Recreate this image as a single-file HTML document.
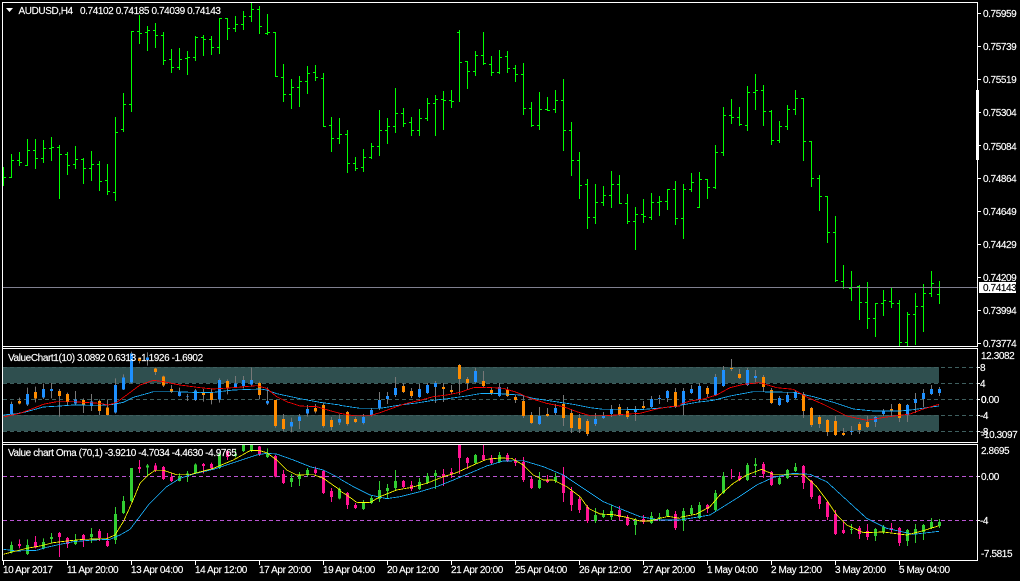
<!DOCTYPE html>
<html><head><meta charset="utf-8"><title>AUDUSD,H4</title>
<style>
html,body{margin:0;padding:0;background:#000;width:1020px;height:581px;overflow:hidden}
svg{display:block}
text{font-family:"Liberation Sans",sans-serif;font-size:10px;letter-spacing:-.4px;fill:#fff;stroke:#fff;stroke-width:.15px}
path,polyline{fill:none;shape-rendering:crispEdges}
</style></head><body>
<svg width="1020" height="581" viewBox="0 0 1020 581" xmlns="http://www.w3.org/2000/svg">
<rect width="1020" height="581" fill="#000"/>
<!-- main bars -->
<path stroke="#00ff00" d="M3.5 167V186M4 177.5h2M11.5 154V178M9 177.5h2M12 160.5h2M19.5 152V166M17 160.5h2M20 162.5h2M27.5 139V166M25 165.5h2M28 150.5h2M35.5 139V169M33 150.5h2M36 158.5h2M43.5 140V163M41 158.5h2M44 148.5h2M51.5 137V161M49 148.5h2M52 147.5h2M59.5 145V199M57 147.5h2M60 154.5h2M67.5 152V175M65 154.5h2M68 165.5h2M75.5 146V169M73 164.5h2M76 159.5h2M83.5 158V184M81 159.5h2M84 168.5h2M91.5 151V181M89 168.5h2M92 164.5h2M99.5 161V191M97 164.5h2M100 181.5h2M107.5 164V195M105 180.5h2M108 191.5h2M115.5 117V201M113 192.5h2M116 132.5h2M123.5 93V132M121 129.5h2M124 104.5h2M131.5 31V112M129 104.5h2M132 31.5h2M139.5 15V44M137 31.5h2M140 33.5h2M147.5 26V51M145 32.5h2M148 30.5h2M155.5 23V48M153 30.5h2M156 35.5h2M163.5 32V65M161 35.5h2M164 60.5h2M171.5 49V73M169 59.5h2M172 67.5h2M179.5 48V70M177 67.5h2M180 59.5h2M187.5 51V75M185 58.5h2M188 57.5h2M195.5 36V61M193 57.5h2M196 37.5h2M203.5 35V56M201 37.5h2M204 39.5h2M211.5 36V55M209 39.5h2M212 47.5h2M219.5 18V54M217 47.5h2M220 18.5h2M227.5 18V40M225 18.5h2M228 28.5h2M235.5 16V32M233 28.5h2M236 24.5h2M243.5 11V30M241 24.5h2M244 16.5h2M251.5 3V22M249 16.5h2M252 9.5h2M259.5 6V34M257 9.5h2M260 26.5h2M267.5 14V35M265 33.5h2M268 32.5h2M275.5 32V77M273 32.5h2M276 76.5h2M283.5 64V102M281 77.5h2M284 94.5h2M291.5 79V109M289 94.5h2M292 87.5h2M299.5 76V107M297 87.5h2M300 81.5h2M307.5 66V94M305 81.5h2M308 73.5h2M315.5 65V81M313 72.5h2M316 77.5h2M323.5 73V127M321 78.5h2M324 126.5h2M331.5 117V152M329 125.5h2M332 138.5h2M339.5 118V144M337 138.5h2M340 134.5h2"/>
<path stroke="#00ff00" d="M347.5 130V173M345 134.5h2M348 163.5h2M355.5 157V171M353 163.5h2M356 168.5h2M363.5 149V172M361 167.5h2M364 157.5h2M371.5 143V159M369 157.5h2M372 146.5h2M379.5 110V156M377 146.5h2M380 130.5h2M387.5 118V144M385 130.5h2M388 126.5h2M395.5 88V133M393 126.5h2M396 113.5h2M403.5 108V127M401 113.5h2M404 123.5h2M411.5 117V136M409 122.5h2M412 130.5h2M419.5 109V136M417 130.5h2M420 118.5h2M427.5 98V121M425 118.5h2M428 103.5h2M435.5 95V136M433 103.5h2M436 99.5h2M443.5 91V130M441 99.5h2M444 100.5h2M451.5 90V108M449 100.5h2M452 101.5h2M459.5 30V102M457 32.5h2M460 62.5h2M467.5 61V89M465 61.5h2M468 71.5h2M475.5 51V76M473 71.5h2M476 55.5h2M483.5 32V65M481 55.5h2M484 63.5h2M491.5 56V76M489 64.5h2M492 72.5h2M499.5 50V74M497 72.5h2M500 57.5h2M507.5 51V73M505 56.5h2M508 68.5h2M515.5 65V82M513 68.5h2M516 74.5h2M523.5 63V115M521 74.5h2M524 108.5h2M531.5 102V127M529 108.5h2M532 125.5h2M539.5 92V130M537 125.5h2M540 109.5h2M547.5 97V111M545 109.5h2M548 110.5h2M555.5 90V113M553 109.5h2M556 100.5h2M563.5 79V151M561 100.5h2M564 130.5h2M571.5 122V176M569 130.5h2M572 160.5h2M579.5 152V199M577 160.5h2M580 185.5h2M587.5 179V229M585 184.5h2M588 217.5h2M595.5 184V224M593 217.5h2M596 202.5h2M603.5 186V206M601 202.5h2M604 195.5h2M611.5 171V208M609 195.5h2M612 184.5h2M619.5 175V204M617 184.5h2M620 203.5h2M627.5 194V224M625 203.5h2M628 221.5h2M635.5 207V250M633 221.5h2M636 214.5h2M643.5 199V223M641 214.5h2M644 216.5h2M651.5 193V220M649 217.5h2M652 202.5h2M659.5 196V216M657 202.5h2M660 201.5h2M667.5 189V210M665 201.5h2M668 189.5h2M675.5 181V225M673 189.5h2M676 218.5h2"/>
<path stroke="#00ff00" d="M683.5 184V239M681 218.5h2M684 189.5h2M691.5 173V192M689 189.5h2M692 182.5h2M699.5 172V208M697 207.5h2M700 179.5h2M707.5 179V199M705 179.5h2M708 187.5h2M715.5 145V189M713 187.5h2M716 152.5h2M723.5 107V156M721 152.5h2M724 115.5h2M731.5 99V124M729 115.5h2M732 117.5h2M739.5 107V126M737 117.5h2M740 124.5h2M747.5 86V131M745 125.5h2M748 92.5h2M755.5 74V110M753 92.5h2M756 90.5h2M763.5 85V126M761 90.5h2M764 111.5h2M771.5 110V145M769 111.5h2M772 140.5h2M779.5 121V143M777 140.5h2M780 126.5h2M787.5 105V130M785 126.5h2M788 109.5h2M795.5 90V115M793 109.5h2M796 98.5h2M803.5 98V161M801 98.5h2M804 141.5h2M811.5 141V187M809 141.5h2M812 178.5h2M819.5 175V211M817 178.5h2M820 196.5h2M827.5 196V243M825 196.5h2M828 232.5h2M835.5 216V282M833 232.5h2M836 280.5h2M843.5 265V289M841 281.5h2M844 287.5h2M851.5 271V301M849 288.5h2M852 287.5h2M859.5 285V320M857 286.5h2M860 302.5h2M867.5 282V329M865 302.5h2M868 318.5h2M875.5 303V337M873 318.5h2M876 303.5h2M883.5 290V316M881 303.5h2M884 300.5h2M891.5 287V308M889 301.5h2M892 303.5h2M899.5 300V346M897 303.5h2M900 342.5h2M907.5 312V346M905 342.5h2M908 314.5h2M915.5 293V345M913 314.5h2M916 306.5h2M923.5 284V332M921 306.5h2M924 293.5h2M931.5 271V297M929 293.5h2M932 283.5h2M939.5 281V304M937 294.5h2M940 287.5h2"/>
<!-- price line -->
<rect x="3" y="287" width="974" height="1" fill="#808090"/>
<!-- pane 1 -->
<rect x="3" y="367" width="936" height="16" fill="#2f4f4f"/>
<rect x="3" y="415" width="936" height="16" fill="#2f4f4f"/>
<g stroke="#3f5f5f" stroke-width="1" stroke-dasharray="4 3">
<path d="M3 367.5H977M3 383.5H977M3 399.5H977M3 415.5H977M3 431.5H977"/>
</g>
<g transform="translate(0,345) scale(1,.33333)">
<path stroke="#777" d="M11.5 170V210M19.5 158V178M27.5 128V183M35.5 125V172M43.5 116V162M51.5 114V160M59.5 132V215M67.5 143V182M75.5 138V180M83.5 160V204M91.5 147V198M99.5 163V210M107.5 163V212M115.5 100V206M123.5 88V135M131.5 20V115M139.5 38V55M147.5 22V62M155.5 68V90M163.5 92V126M171.5 120V144M179.5 128V155M187.5 147V168M195.5 132V168M203.5 132V170M211.5 130V178M219.5 100V173M227.5 103V148M235.5 93V128M243.5 93V130M251.5 68V125M259.5 110V163M267.5 127V180M275.5 165V248M283.5 207V258M291.5 218V262M299.5 207V252M307.5 180V215M315.5 177V205M323.5 172V248M331.5 216V255M339.5 208V240M347.5 198V242M355.5 216V234M363.5 207V238M371.5 189V214M379.5 141V195M387.5 141V177M395.5 96V156M403.5 114V144M411.5 129V159M419.5 117V159M427.5 114V147M435.5 108V174M443.5 114V171M451.5 120V147M459.5 57V150M467.5 96V135M475.5 69V114M483.5 78V126M491.5 126V150M499.5 114V156M507.5 126V156M515.5 150V174M523.5 150V219M531.5 201V237M539.5 186V240M547.5 189V216M555.5 177V210M563.5 150V243M571.5 192V264M579.5 207V264M587.5 222V273M595.5 204V243M603.5 201V222M611.5 180V216M619.5 177V213M627.5 186V222M635.5 183V228M643.5 168V195M651.5 153V189M659.5 150V177M667.5 135V171M675.5 129V189M683.5 129V210M691.5 120V147M699.5 114V171M707.5 123V156M715.5 87V153M723.5 63V126M731.5 42V78M739.5 72V102M747.5 69V123M755.5 75V111M763.5 90V141M771.5 129V177M779.5 153V183M787.5 141V174M795.5 135V162M803.5 141V219M811.5 186V246M819.5 210V249M827.5 222V273M835.5 213V273M843.5 249V273M851.5 243V270M859.5 231V267M867.5 213V249M875.5 213V246M883.5 192V213M891.5 177V216M899.5 174V231M907.5 177V231M915.5 144V204M923.5 132V186M931.5 120V150M939.5 126V153"/>
<path stroke="#1e90ff" stroke-width="3" d="M11.5 177V207M27.5 147V178M43.5 132V157M51.5 132V138M75.5 163V175M91.5 170V183M115.5 120V203M123.5 98V133M131.5 25V112M147.5 38V45M179.5 140V153M187.5 154V156M195.5 136V165M219.5 105V163M235.5 115V126M243.5 105V123M251.5 105V118M267.5 168V175M291.5 231V244M299.5 215V228M307.5 192V205M339.5 222V232M363.5 216V234M371.5 195V210M379.5 165V191M387.5 153V162M395.5 129V150M419.5 132V156M427.5 120V144M435.5 114V126M475.5 78V111M499.5 126V153M539.5 213V237M555.5 189V204M595.5 222V237M603.5 213V219M611.5 192V207M635.5 192V201M651.5 162V186M659.5 159V162M667.5 138V159M683.5 138V180M691.5 132V144M699.5 123V165M715.5 96V150M723.5 75V123M747.5 75V120M755.5 93V99M779.5 159V180M787.5 150V171M795.5 141V159M851.5 258V261M875.5 216V231M883.5 198V207M907.5 180V210M915.5 162V174M923.5 144V162M931.5 132V147M939.5 132V144"/>
<path stroke="#ff8c00" stroke-width="3" d="M19.5 168V175M35.5 141V160M59.5 138V153M67.5 147V170M83.5 165V180M99.5 168V198M107.5 188V210M139.5 40V48M155.5 71V81M163.5 95V122M171.5 132V140M203.5 143V150M211.5 143V165M227.5 108V130M259.5 114V150M275.5 165V243M283.5 222V252M315.5 189V199M323.5 180V243M331.5 225V246M347.5 201V237M355.5 222V231M403.5 123V141M411.5 138V153M443.5 126V132M451.5 135V141M459.5 60V102M467.5 102V114M483.5 108V123M491.5 135V144M507.5 135V153M515.5 156V165M523.5 168V213M531.5 210V234M547.5 207V213M563.5 177V219M571.5 204V249M579.5 219V252M587.5 228V267M619.5 186V210M627.5 198V216M643.5 183V189M675.5 141V186M707.5 129V147M731.5 69V72M739.5 87V99M763.5 96V126M771.5 135V174M803.5 147V198M811.5 189V240M819.5 216V237M827.5 225V261M835.5 228V270M843.5 264V270M859.5 237V255M867.5 231V246M891.5 192V198M899.5 177V219"/>
</g>
<g fill="none" stroke-width="2.4" shape-rendering="crispEdges">
<polyline transform="translate(0,345) scale(.33333)" stroke="#1ab2ff" points="10,210 50,206 80,200 130,186 180,183 220,180 300,181 340,178 370,172 400,157 440,146 460,140 530,140 600,143 640,142 700,135 780,132 800,135 830,146 900,161 960,172 1020,180"/>
<polyline transform="translate(340,345) scale(.33333)" stroke="#1ab2ff" points="0,181 40,187 60,190 120,190 180,180 230,174 280,166 330,160 380,153 420,146 460,145 540,150 580,160 620,166 660,172 700,178 750,188 790,193 860,193 900,194 950,190 1020,183"/>
<polyline transform="translate(680,345) scale(.33333)" stroke="#1ab2ff" points="0,181 50,172 100,166 150,153 220,140 340,142 400,155 460,172 520,192 580,198 660,198 700,194 740,188 777,183"/>
<polyline transform="translate(0,345) scale(.33333)" stroke="#f00" points="10,216 60,205 100,190 130,178 170,170 220,170 300,175 325,180 350,172 380,150 420,120 460,106 490,110 540,120 600,128 640,132 700,128 770,122 800,130 830,155 860,170 900,183 950,185 990,197 1020,205"/>
<polyline transform="translate(340,345) scale(.33333)" stroke="#f00" points="0,205 40,212 90,212 120,203 170,185 200,175 240,166 280,155 320,150 360,142 400,128 440,127 490,130 530,142 570,160 620,175 670,185 710,200 750,212 800,212 850,208 900,205 950,192 990,185 1020,183"/>
<polyline transform="translate(680,345) scale(.33333)" stroke="#f00" points="0,178 30,168 70,162 110,150 150,128 190,118 240,113 290,128 340,133 380,156 430,178 500,213 560,226 620,216 690,207 730,192 777,178"/>
</g>
<!-- pane 2 -->
<path stroke="#ba55d3" stroke-dasharray="4 3" d="M3 476.5H977M3 520.5H977"/>
<g transform="translate(0,440) scale(1,.33333)">
<path stroke="#32cd32" d="M11.5 305V340M27.5 298V345M43.5 295V328M51.5 279V310M75.5 282V315M91.5 264V309M115.5 201V312M123.5 168V222M131.5 84V186M147.5 72V110M179.5 100V124M187.5 93V126M195.5 70V102M219.5 40V87M235.5 30V52M243.5 12V36M251.5 12V36M267.5 25V54M291.5 102V141M299.5 96V138M307.5 84V110M339.5 143V178M363.5 180V210M371.5 168V192M379.5 123V186M387.5 132V174M395.5 90V150M419.5 114V150M427.5 99V132M435.5 90V147M475.5 42V72M499.5 36V69M539.5 96V147M555.5 99V129M595.5 204V249M603.5 210V234M611.5 195V240M635.5 234V285M651.5 216V252M659.5 219V243M667.5 207V231M683.5 204V273M691.5 195V225M699.5 186V237M715.5 150V213M723.5 96V162M747.5 69V123M755.5 54V105M779.5 108V135M787.5 87V117M795.5 69V96M851.5 252V282M875.5 264V303M883.5 255V282M907.5 267V318M915.5 252V309M923.5 252V300M931.5 234V267M939.5 237V264"/>
<path stroke="#32cd32" stroke-width="3" d="M11.5 315V338M27.5 315V342M43.5 306V325M51.5 291V297M75.5 300V312M91.5 282V291M115.5 222V300M123.5 183V219M131.5 84V183M147.5 76V82M179.5 108V123M187.5 100V105M195.5 74V100M219.5 42V84M235.5 42V48M243.5 14V33M251.5 14V33M267.5 42V51M291.5 114V126M299.5 105V117M307.5 90V105M339.5 147V175M363.5 189V207M371.5 174V189M379.5 150V177M387.5 144V153M395.5 123V144M419.5 126V147M427.5 108V129M435.5 99V108M475.5 45V69M499.5 45V66M539.5 120V144M555.5 111V123M595.5 225V243M603.5 222V231M611.5 213V231M635.5 243V255M651.5 228V249M659.5 231V234M667.5 210V228M683.5 213V243M691.5 204V222M699.5 195V234M715.5 159V210M723.5 108V159M747.5 75V120M755.5 72V78M779.5 114V132M787.5 90V114M795.5 81V93M851.5 267V270M875.5 267V288M883.5 261V276M907.5 270V303M915.5 267V282M923.5 255V276M931.5 246V264M939.5 246V258"/>
<path stroke="#ff1493" d="M19.5 298V325M35.5 288V325M59.5 276V351M67.5 291V324M83.5 282V321M99.5 267V303M107.5 279V321M139.5 60V99M155.5 69V96M163.5 78V120M171.5 100V126M203.5 69V100M211.5 68V90M227.5 30V60M259.5 18V48M275.5 45V112M283.5 90V132M315.5 80V104M323.5 90V162M331.5 144V186M347.5 156V207M355.5 189V207M403.5 120V144M411.5 123V153M443.5 87V138M451.5 84V114M459.5 12V102M467.5 51V87M483.5 15V63M491.5 45V72M507.5 39V66M515.5 54V78M523.5 51V126M531.5 111V147M547.5 105V129M563.5 81V186M571.5 141V213M579.5 168V219M587.5 195V249M619.5 198V240M627.5 225V258M643.5 225V252M675.5 213V270M707.5 192V219M731.5 87V117M739.5 96V123M763.5 66V114M771.5 93V138M803.5 75V147M811.5 120V177M819.5 165V207M827.5 183V240M835.5 210V285M843.5 246V282M859.5 258V297M867.5 252V300M891.5 249V276M899.5 261V318"/>
<path stroke="#ff1493" stroke-width="3" d="M19.5 312V318M35.5 306V322M59.5 279V291M67.5 294V312M83.5 285V300M99.5 273V294M107.5 303V318M139.5 81V87M155.5 76V90M163.5 81V117M171.5 111V123M203.5 72V78M211.5 72V84M227.5 33V51M259.5 20V42M275.5 48V109M283.5 102V129M315.5 88V99M323.5 93V159M331.5 153V171M347.5 159V195M355.5 195V204M403.5 123V141M411.5 135V147M443.5 102V111M451.5 96V102M459.5 15V54M467.5 54V69M483.5 45V60M491.5 54V69M507.5 45V63M515.5 60V69M523.5 66V120M531.5 117V144M547.5 120V126M563.5 105V159M571.5 153V195M579.5 177V210M587.5 201V243M619.5 210V231M627.5 231V255M643.5 237V246M675.5 222V264M707.5 195V207M739.5 108V120M763.5 72V102M771.5 96V135M803.5 78V129M811.5 123V171M819.5 168V192M827.5 186V231M835.5 222V282M843.5 270V279M859.5 264V282M867.5 273V291M891.5 264V270M899.5 264V309"/>
</g>
<g fill="none" stroke-width="2.4" shape-rendering="crispEdges">
<polyline transform="translate(0,440) scale(.33333)" stroke="#1ab2ff" points="10,328 50,333 110,331 140,322 180,313 220,305 280,300 330,298 360,285 390,268 415,235 445,195 470,170 500,140 540,115 580,102 640,88 700,68 770,45 800,40 830,42 880,60 930,80 970,90 1020,115"/>
<polyline transform="translate(340,440) scale(.33333)" stroke="#1ab2ff" points="0,117 40,140 90,165 140,176 180,170 240,155 290,140 340,120 400,95 440,78 490,63 550,62 610,80 670,105 730,145 790,185 850,210 900,230 960,240 1020,240"/>
<polyline transform="translate(680,440) scale(.33333)" stroke="#1ab2ff" points="0,240 90,225 170,175 230,135 280,112 340,100 390,103 440,125 500,180 560,235 620,265 700,283 777,274"/>
<polyline transform="translate(0,440) scale(.33333)" stroke="#ff0" points="10,343 40,335 80,325 120,318 160,308 200,303 250,298 320,296 345,285 370,245 395,190 420,130 445,105 465,91 490,91 530,104 570,104 640,85 700,60 750,32 775,31 800,38 830,60 860,90 890,105 940,104 970,115 1020,150"/>
<polyline transform="translate(340,440) scale(.33333)" stroke="#ff0" points="0,153 20,165 50,187 90,188 120,170 170,150 210,143 260,130 310,110 350,98 400,75 440,58 480,54 515,55 550,75 580,105 610,120 640,120 680,140 720,170 745,205 780,222 820,224 860,232 900,243 930,243 960,235 985,229 1020,235"/>
<polyline transform="translate(680,440) scale(.33333)" stroke="#ff0" points="0,232 50,222 90,200 120,165 160,130 200,105 245,88 280,103 330,103 370,103 410,140 440,180 470,225 500,255 550,278 610,276 680,285 730,272 777,257"/>
</g>
<!-- frames -->
<g fill="#fff">
<rect x="2" y="2" width="975" height="1"/><rect x="2" y="2" width="1" height="559"/>
<rect x="977" y="2" width="1" height="344"/><rect x="2" y="346" width="976" height="1"/>
<rect x="2" y="348" width="976" height="1"/><rect x="977" y="348" width="1" height="94"/>
<rect x="2" y="442" width="976" height="1"/><rect x="2" y="444" width="976" height="1"/>
<rect x="977" y="444" width="1" height="116"/><rect x="2" y="560" width="976" height="1"/>
<rect x="976" y="90" width="3" height="70"/>
</g>
<!-- axis ticks -->
<path stroke="#fff" d="M978 13.5h3M978 46.5h3M978 79.5h3M978 112.5h3M978 145.5h3M978 178.5h3M978 211.5h3M978 244.5h3M978 277.5h3M978 310.5h3M978 343.5h3M978 367.5h2M978 383.5h2M978 399.5h2M978 415.5h2M978 431.5h2M978 476.5h2M978 520.5h2M3.5 561v4M67.5 561v4M131.5 561v4M195.5 561v4M259.5 561v4M323.5 561v4M387.5 561v4M451.5 561v4M515.5 561v4M579.5 561v4M643.5 561v4M707.5 561v4M771.5 561v4M835.5 561v4M899.5 561v4"/>
<rect x="979" y="282" width="37" height="11" fill="#fff"/>
<polygon points="6,8 13,8 9.5,12" fill="#fff"/>
<!-- text -->
<text x="18.5" y="14">AUDUSD,H4</text>
<text x="80" y="14">0.74102 0.74185 0.74039 0.74143</text>
<text x="8" y="361">ValueChart1(10) 3.0892 0.6313 -1.1926 -1.6902</text>
<text x="8" y="456">Value chart Oma (70,1) -3.9210 -4.7034 -4.4630 -4.9765</text>
<text x="983" y="17">0.75959</text><text x="983" y="50">0.75739</text><text x="983" y="83">0.75519</text><text x="983" y="116">0.75304</text><text x="983" y="150">0.75084</text><text x="983" y="182">0.74864</text><text x="983" y="215">0.74649</text><text x="983" y="248">0.74429</text><text x="983" y="281">0.74209</text>
<text x="983" y="291" style="fill:#000;stroke:#000">0.74143</text>
<text x="983" y="314">0.73994</text><text x="983" y="347">0.73774</text>
<text x="981" y="359">12.3082</text><text x="980" y="371">8</text><text x="980" y="387">4</text><text x="981" y="403">0.00</text><text x="981" y="403">0</text><text x="980" y="419">-4</text><text x="980" y="435">-8</text><text x="981" y="438">-10.3097</text>
<text x="981" y="454">2.8695</text><text x="981" y="480">0.00</text><text x="980" y="524">-4</text><text x="981" y="557">-7.5815</text>
<text x="3" y="573">10 Apr 2017</text><text x="67" y="573">11 Apr 20:00</text><text x="131" y="573">13 Apr 04:00</text><text x="195" y="573">14 Apr 12:00</text><text x="259" y="573">17 Apr 20:00</text><text x="323" y="573">19 Apr 04:00</text><text x="387" y="573">20 Apr 12:00</text><text x="451" y="573">21 Apr 20:00</text><text x="515" y="573">25 Apr 04:00</text><text x="579" y="573">26 Apr 12:00</text><text x="643" y="573">27 Apr 20:00</text><text x="707" y="573">1 May 04:00</text><text x="771" y="573">2 May 12:00</text><text x="835" y="573">3 May 20:00</text><text x="899" y="573">5 May 04:00</text>
</svg>
</body></html>
